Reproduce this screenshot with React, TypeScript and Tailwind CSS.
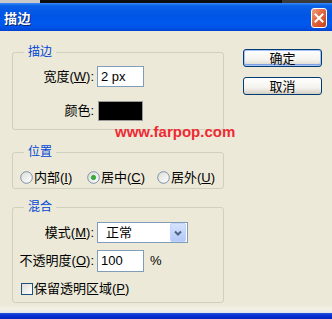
import React from "react";

const U = ({ children }: { children: React.ReactNode }) => (
  <span className="underline underline-offset-[1px]">{children}</span>
);

function Radio({ checked }: { checked?: boolean }) {
  return (
    <svg width="13" height="13" viewBox="0 0 13 13" className="shrink-0">
      <defs>
        <linearGradient id={checked ? "rg1" : "rg0"} x1="0" y1="0" x2="1" y2="1">
          <stop offset="0" stopColor="#dcdcd7" />
          <stop offset="1" stopColor="#ffffff" />
        </linearGradient>
      </defs>
      <circle cx="6.5" cy="6.5" r="5.8" fill={`url(#${checked ? "rg1" : "rg0"})`} stroke="#7a8fa8" strokeWidth="1" />
      {checked && <circle cx="6.5" cy="6.5" r="2.2" fill="#35b035" stroke="#1f8f1f" strokeWidth="0.6" />}
    </svg>
  );
}

function Group({
  title,
  className,
  children,
}: {
  title: string;
  className: string;
  children: React.ReactNode;
}) {
  return (
    <fieldset className={`w-[212px] border border-[#d0d0bf] rounded-[3px] p-0 m-0 min-w-0 ${className}`}>
      <legend className="ml-[11px] px-[4px] leading-[14px] text-[12px] text-[#0046d5]">{title}</legend>
      {children}
    </fieldset>
  );
}

function XPButton({ label, primary }: { label: string; primary?: boolean }) {
  return (
    <div
      className={`w-[79px] h-[18px] rounded-[3px] border border-[#003c74] flex items-center justify-center text-[13px] text-black leading-none ${
        primary
          ? "bg-[linear-gradient(to_bottom,#ffffff,#f4f3ee_60%,#d8d4c8)] shadow-[inset_0_0_0_1px_#a6c2f4,inset_0_-1px_0_1px_#7fa2e6]"
          : "bg-[linear-gradient(to_bottom,#ffffff,#f4f3ee_60%,#d6d0c5)] shadow-[inset_0_-1px_0_0_#d6d0c5]"
      }`}
    >
      {label}
    </div>
  );
}

export default function App() {
  return (
    <div className="relative w-[332px] h-[319px] overflow-hidden bg-[#ece9d8] text-[13px] text-black font-['Liberation_Sans','Noto_Sans_CJK_SC',sans-serif]">
      {/* top background strip */}
      <div className="h-[3px] flex">
        <div className="w-[40px] bg-[#c9c9c9]" />
        <div className="flex-1 bg-[#0e0e0e]" />
        <div className="w-[50px] bg-[#3a3a3a]" />
      </div>

      {/* title bar */}
      <div className="h-[28px] flex items-center justify-between pl-[4px] pr-[5px] bg-[linear-gradient(to_bottom,#3b8cf5_0%,#0a5fe6_10%,#0055e5_45%,#0058ee_75%,#0050e2_92%,#0040cc_100%)]">
        <span className="text-white font-bold text-[13px] leading-none tracking-[0.5px] font-['Noto_Sans_CJK_SC',sans-serif] [text-shadow:1px_1px_0_#0a246a]">
          描边
        </span>
        <div className="mt-[2px] w-[16px] h-[20px] rounded-[3px] border border-white bg-[linear-gradient(to_bottom_right,#f0a080,#e2683e_45%,#c8401a)] flex items-center justify-center">
          <svg width="10" height="10" viewBox="0 0 10 10">
            <path d="M1.5 1.5 L8.5 8.5 M8.5 1.5 L1.5 8.5" stroke="#fff" strokeWidth="2" strokeLinecap="square" />
          </svg>
        </div>
      </div>

      {/* body */}
      <div className="h-[274px] flex">
        <div className="w-[224px] pl-[12px] flex flex-col">
          <Group title="描边" className="mt-[14px] h-[85px]">
            <div className="pt-[7px]">
              <div className="flex items-center h-[21px]">
                <div className="w-[81px] text-right whitespace-nowrap">
                  宽度(<U>W</U>):
                </div>
                <div className="ml-[3px] w-[47px] h-[21px] border border-[#7f9db9] bg-white flex items-center pl-[3px]">
                  2 px
                </div>
              </div>
              <div className="flex items-center h-[20px] mt-[14px]">
                <div className="w-[81px] text-right">颜色:</div>
                <div className="ml-[4px] w-[45px] h-[20px] border border-[#9a9a9a] bg-black" />
              </div>
            </div>
          </Group>

          <Group title="位置" className="mt-[15px] h-[44px]">
            <div className="pt-[12px] pl-[7px] flex items-center h-[25px]">
              <div className="w-[67px] flex items-center gap-[1px]">
                <Radio />
                <span className="whitespace-nowrap">
                  内部(<U>I</U>)
                </span>
              </div>
              <div className="w-[70px] flex items-center gap-[1px]">
                <Radio checked />
                <span className="whitespace-nowrap">
                  居中(<U>C</U>)
                </span>
              </div>
              <div className="flex items-center gap-[1px]">
                <Radio />
                <span className="whitespace-nowrap">
                  居外(<U>U</U>)
                </span>
              </div>
            </div>
          </Group>

          <Group title="混合" className="mt-[11px] h-[103px]">
            <div className="pt-[8px]">
              <div className="flex items-center h-[21px]">
                <div className="w-[81px] text-right whitespace-nowrap">
                  模式(<U>M</U>):
                </div>
                <div className="ml-[3px] w-[91px] h-[21px] border border-[#7f9db9] bg-white flex items-center justify-between">
                  <span className="pl-[8px]">正常</span>
                  <div className="w-[16px] h-[19px] mr-[1px] rounded-[2px] border border-[#c3d3fd] bg-[linear-gradient(to_bottom,#d6e2fd,#b2c8f7)] flex items-center justify-center">
                    <svg width="8" height="6" viewBox="0 0 8 6">
                      <path d="M1 1.5 L4 4.5 L7 1.5" stroke="#4d6185" strokeWidth="2" fill="none" />
                    </svg>
                  </div>
                </div>
              </div>
              <div className="flex items-center h-[22px] mt-[7px]">
                <div className="w-[81px] text-right whitespace-nowrap">
                  不透明度(<U>O</U>):
                </div>
                <div className="ml-[3px] w-[47px] h-[22px] border border-[#7f9db9] bg-white flex items-center pl-[3px]">
                  100
                </div>
                <span className="ml-[6px]">%</span>
              </div>
              <div className="flex items-center h-[14px] mt-[10px] pl-[8px]">
                <div className="w-[12px] h-[12px] border border-[#1c5180] bg-[linear-gradient(to_bottom_right,#dcdcd7,#ffffff)]" />
                <span className="ml-[1px] whitespace-nowrap">
                  保留透明区域(<U>P</U>)
                </span>
              </div>
            </div>
          </Group>
        </div>

        <div className="pl-[19px] pt-[18px] flex flex-col gap-[10px]">
          <XPButton label="确定" primary />
          <XPButton label="取消" />
        </div>
      </div>

      {/* bottom edge */}
      <div className="h-[8px] bg-[linear-gradient(to_bottom,#ece9d8,#f3f0e4_40%,#f2ece6_70%,#dfe8f0)]" />
      <div className="h-[6px] bg-[linear-gradient(to_bottom,#2a52d8,#0831d9_40%,#0026b8)]" />

      {/* watermark */}
      <div className="absolute left-[115px] top-[124px] text-[15px] font-bold text-[#ee2a32] font-['Liberation_Sans',sans-serif] leading-none">
        www.farpop.com
      </div>
    </div>
  );
}
